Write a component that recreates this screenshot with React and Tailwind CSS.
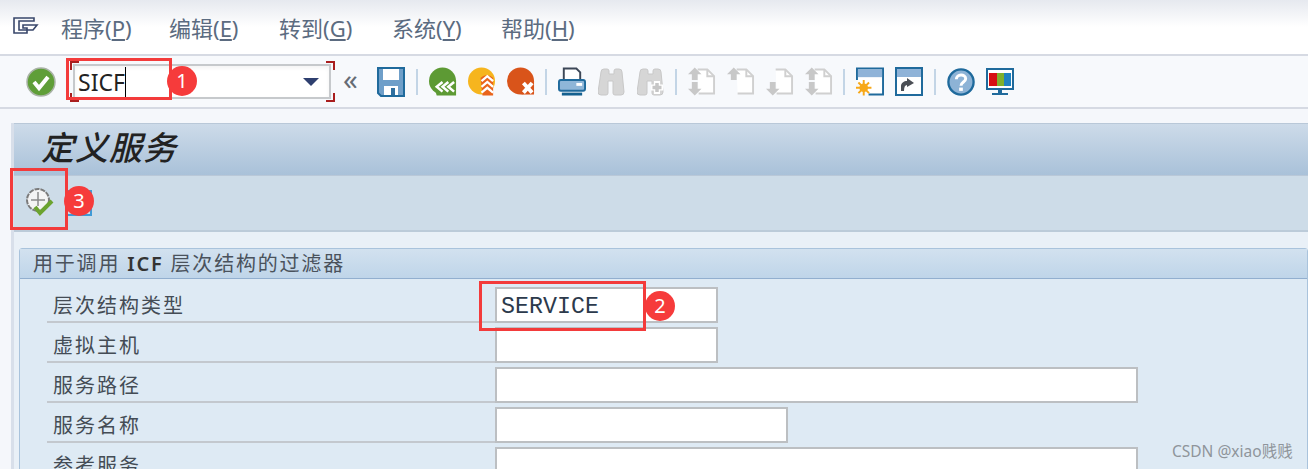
const cjk = { fontFamily: '"Noto Sans", "Noto Sans CJK SC", sans-serif' };

function MenuItem({ label, hot, width }) {
  return (
    <span className={`text-[22px] leading-[30px] text-[#5b6b80] ${width}`}>
      {label}(<span className="underline underline-offset-2">{hot}</span>)
    </span>
  );
}

function Sep({ tight }) {
  return <span className={`mr-[11px] h-[26px] w-[2px] bg-[#c3d5e6] ${tight ? "ml-[10px]" : "ml-[11px]"}`} />;
}

function Slot({ children }) {
  return <span className="flex h-[32px] w-[28px] items-center justify-center [&+&]:ml-[11px]">{children}</span>;
}

function MenuIcon() {
  return (
    <svg width="27" height="22" viewBox="0 0 27 22" fill="none" stroke="#39476b" strokeWidth="1.6">
      <path d="M2 1h20v3H7v9h8v-2H11V8h14l-4 5h-6v3H2z" />
    </svg>
  );
}

function OkIcon() {
  return (
    <svg width="30" height="30" viewBox="0 0 30 30">
      <circle cx="15" cy="15" r="14" fill="#5f9e38" stroke="#a9b3a6" strokeWidth="1.5" />
      <path d="M8 15l5 6 9-11" fill="none" stroke="#fff" strokeWidth="4" />
    </svg>
  );
}

function SaveIcon() {
  return (
    <svg width="28" height="30" viewBox="0 0 28 30">
      <path d="M1 1h26v28H4l-3-3z" fill="#6f9fc9" stroke="#1f6a9c" strokeWidth="2" />
      <rect x="6" y="2" width="16" height="11" fill="#fff" />
      <rect x="7" y="19" width="14" height="9" fill="#fff" />
      <rect x="14" y="21" width="4" height="7" fill="#2f6f9f" />
    </svg>
  );
}

function BackIcon() {
  return (
    <svg width="29" height="29" viewBox="0 0 29 29">
      <circle cx="14" cy="14" r="14" fill="#5d9a34" />
      <path d="M5 19l7-6h16v16H8z" fill="#5d9a34" />
      <path d="M14 15l-6 5 6 5M20 15l-6 5 6 5M26 15l-6 5 6 5" fill="none" stroke="#fff" strokeWidth="2.6" />
    </svg>
  );
}

function ExitIcon() {
  return (
    <svg width="29" height="29" viewBox="0 0 29 29">
      <circle cx="14" cy="14" r="14" fill="#f6b51e" />
      <path d="M13 11c3-4 10-4 13 0v18H15z" fill="#e9641c" />
      <path d="M14 14l6-5 6 5M14 20l6-5 6 5M14 26l6-5 6 5" fill="none" stroke="#fff" strokeWidth="2.4" />
    </svg>
  );
}

function CancelIcon() {
  return (
    <svg width="29" height="29" viewBox="0 0 29 29">
      <circle cx="14" cy="14" r="14" fill="#d9541a" />
      <path d="M15 14h13v14H15z" fill="#d9541a" />
      <path d="M17 16l9 10M26 16l-9 10" stroke="#fff" strokeWidth="4" />
    </svg>
  );
}

function PrintIcon() {
  return (
    <svg width="29" height="30" viewBox="0 0 29 30">
      <path d="M6 13V1h13l4 4v8" fill="#fff" stroke="#3c4757" strokeWidth="2" />
      <rect x="1" y="13" width="27" height="11" rx="2" fill="#8fb6d8" stroke="#1f6a9c" strokeWidth="2" />
      <rect x="19" y="16" width="6" height="3" fill="#fff" />
      <rect x="4" y="26" width="21" height="3" fill="#14608f" />
    </svg>
  );
}

function FindIcon({ plus }) {
  return (
    <svg width="27" height="28" viewBox="0 0 27 28">
      <path d="M3 4q0-3 3-3h3q2 0 2 2v3h5V3q0-2 2-2h3q3 0 3 3l2 20q0 3-3 3h-6q-2 0-2-2V13h-5v12q0 2-2 2H3q-3 0-3-3z" fill="#d6d6d6" stroke="#c8c8c8" />
      {plus && <path d="M20 13v13M14 19.500h12" stroke="#fff" strokeWidth="6" />}
      {plus && <path d="M20 15v9M15.500 19.500h9" stroke="#c6c6c6" strokeWidth="3.500" />}
    </svg>
  );
}

function PageIcon({ up, down }) {
  return (
    <svg width="29" height="29" viewBox="0 0 29 29">
      <path d="M10 2h10l7 7v18H11" fill="#fff" stroke="#d0d0d0" strokeWidth="2" />
      <path d="M20 2v7h7" fill="none" stroke="#d0d0d0" strokeWidth="2" />
      {up && <path d="M7 0l7 7h-4v6H4V7H0z" fill="#c8c8c8" />}
      {down && <path d="M7 29l7-7h-4v-7H4v7H0z" fill="#c8c8c8" />}
    </svg>
  );
}

function SessionIcon() {
  return (
    <svg width="29" height="29" viewBox="0 0 29 29">
      <path d="M1 13V1h27v27H13" fill="#fff" stroke="#1f6a9c" strokeWidth="2" />
      <rect x="2" y="2" width="25" height="8" fill="#8fb3d8" />
      <circle cx="8" cy="21" r="4.500" fill="#f7a818" />
      <path d="M8 13v16M0 21h16M2.500 15.500l11 11M13.500 15.500l-11 11" stroke="#f7a818" strokeWidth="2" />
    </svg>
  );
}

function ShortcutIcon() {
  return (
    <svg width="28" height="29" viewBox="0 0 28 29">
      <rect x="1" y="1" width="26" height="27" fill="#fff" stroke="#1f6a9c" strokeWidth="2" />
      <rect x="2" y="2" width="24" height="8" fill="#8fb3d8" />
      <path d="M6 24v-5c0-3 3-5 6-5v-3l7 5-7 4v-2c-2 0-3 2-3 6z" fill="#4b4f55" />
    </svg>
  );
}

function HelpIcon() {
  return (
    <svg width="30" height="30" viewBox="0 0 30 30">
      <circle cx="15" cy="15" r="13.500" fill="#8db3d6" stroke="#1f6a9c" strokeWidth="2.500" />
      <path d="M10 12c0-6 10-6 10-.5 0 3.500-5 3.500-5 7.500" fill="none" stroke="#fff" strokeWidth="3.200" />
      <rect x="13" y="21" width="4" height="3.500" fill="#fff" />
    </svg>
  );
}

function LayoutIcon() {
  return (
    <svg width="28" height="28" viewBox="0 0 28 28">
      <rect x="1" y="1" width="26" height="20" fill="#fff" stroke="#1f6a9c" strokeWidth="2" />
      <rect x="3" y="5" width="8" height="13" fill="#d60f12" />
      <rect x="11" y="5" width="7" height="13" fill="#7fb02c" />
      <rect x="18" y="5" width="7" height="13" fill="#1f82c0" />
      <path d="M12 21h4v4h-4zM6 25h16v2H6z" fill="#1f6a9c" />
    </svg>
  );
}

function ClockIcon() {
  return (
    <svg width="30" height="30" viewBox="0 0 30 30">
      <circle cx="12" cy="12" r="11" fill="#f4f4f4" stroke="#7b7b7b" strokeWidth="2" strokeDasharray="5 1" />
      <path d="M12 4v14M5 12h14" stroke="#8a8a8a" strokeWidth="1.500" />
      <path d="M9 19l5 6 12-12" fill="none" stroke="#6ba32f" strokeWidth="4" />
    </svg>
  );
}

function Field({ label, width, value }) {
  return (
    <div className="flex h-[40px] items-end">
      <div className="flex h-full w-[449px] items-center border-b-2 border-[#c3c8ce] pl-[6px] pt-[7px] text-[20px] tracking-[2px] text-[#444c55]">
        {label}
      </div>
      <div className={`h-[36px] ${width} -ml-px border-2 border-[#bcbfc2] bg-white pl-[4px] text-[23.300px] leading-[36px] text-[#2c3a4c] [font-family:'Liberation_Mono',monospace]`}>
        {value}
      </div>
    </div>
  );
}

function Marker({ className }) {
  return <div className={`absolute border-[3px] border-[#f33b3b] ${className}`} />;
}

function Badge({ n, className }) {
  return (
    <div className={`absolute flex h-[30px] w-[30px] items-center justify-center rounded-full bg-[#f63b3b] text-[20px] text-white ${className}`}>
      {n}
    </div>
  );
}

export default function App() {
  return (
    <div className="relative h-[469px] w-[1308px] overflow-hidden bg-[#f5f7fb]" style={cjk}>
      <div className="flex h-[54px] items-center bg-gradient-to-b from-[#e6e9ef] via-white to-white to-30% pl-[12px] pt-[2px]">
        <MenuIcon />
        <div className="ml-[22px] flex">
          <MenuItem label="程序" hot="P" width="w-[108px]" />
          <MenuItem label="编辑" hot="E" width="w-[110px]" />
          <MenuItem label="转到" hot="G" width="w-[113px]" />
          <MenuItem label="系统" hot="Y" width="w-[109px]" />
          <MenuItem label="帮助" hot="H" width="w-[100px]" />
        </div>
      </div>

      <div className="flex h-[55px] items-center border-y-2 border-[#d6dae3] bg-[#f7f9fc] pl-[26px]">
        <OkIcon />
        <div className="relative ml-[17px] flex h-[35px] w-[258px] items-center justify-between border-2 border-[#c6c9cc] bg-white pl-[3px] pr-[10px] shadow-inner">
          <span className="border-r border-black text-[23px] leading-[30px] text-[#222]">SICF</span>
          <span className="h-0 w-0 border-x-[8px] border-t-[8px] border-x-transparent border-t-[#2e3f6f]" />
          <span className="absolute -left-[5px] -top-[5px] h-[9px] w-[9px] border-l-2 border-t-2 border-[#a91e1e]" />
          <span className="absolute -right-[6px] -top-[5px] h-[9px] w-[9px] border-r-2 border-t-2 border-[#a91e1e]" />
          <span className="absolute -bottom-[5px] -left-[5px] h-[9px] w-[9px] border-b-2 border-l-2 border-[#a91e1e]" />
          <span className="absolute -bottom-[5px] -right-[6px] h-[9px] w-[9px] border-b-2 border-r-2 border-[#a91e1e]" />
        </div>
        <span className="ml-[12px] w-[34px] pb-[6px] text-[29px] leading-none text-[#666c74]">«</span>
        <SaveIcon />
        <Sep />
        <Slot><BackIcon /></Slot>
        <Slot><ExitIcon /></Slot>
        <Slot><CancelIcon /></Slot>
        <Sep tight />
        <Slot><PrintIcon /></Slot>
        <Slot><FindIcon /></Slot>
        <Slot><FindIcon plus /></Slot>
        <Sep />
        <Slot><PageIcon up down /></Slot>
        <Slot><PageIcon up /></Slot>
        <Slot><PageIcon down /></Slot>
        <Slot><PageIcon up down /></Slot>
        <Sep tight />
        <Slot><SessionIcon /></Slot>
        <Slot><ShortcutIcon /></Slot>
        <Sep />
        <Slot><HelpIcon /></Slot>
        <Slot><LayoutIcon /></Slot>
      </div>

      <div className="ml-[11px] mt-[14px] h-[346px] border-l-[3px] border-[#d8dfea] bg-[#e9f0f7]">
        <div className="flex h-[53px] items-center border-y border-[#b9c8d8] bg-gradient-to-b from-[#cddbe9] to-[#a9c1d9] pb-[5px] pl-[27px]">
          <h1 className="text-[33px] font-medium italic leading-none tracking-[1px] text-[#222]">定义服务</h1>
        </div>
        <div className="flex h-[56px] items-center gap-[10px] border-b-2 border-[#bccbd9] bg-[#cddce8] pl-[12px]">
          <ClockIcon />
          <span className="h-[26px] w-[26px] border-2 border-[#3f9ad6] bg-[#cddce8]" />
        </div>
        <div className="ml-[5px] mt-[16px] h-[240px] rounded-t-[3px] border border-[#a9c3dc] bg-[#deeaf4]">
          <div className="flex h-[30px] items-center border-b border-[#92afcf] bg-gradient-to-b from-[#d2e1ef] to-[#bfd5e9] pl-[13px] text-[20px] tracking-[1.800px] text-[#4a525c]">
            用于调用&nbsp;<b className="font-semibold text-[#333]">ICF</b>&nbsp;层次结构的过滤器
          </div>
          <div className="ml-[27px] mt-[4px]">
            <Field label="层次结构类型" width="w-[223px]" value="SERVICE" />
            <Field label="虚拟主机" width="w-[223px]" />
            <Field label="服务路径" width="w-[643px]" />
            <Field label="服务名称" width="w-[293px]" />
            <Field label="参考服务" width="w-[643px]" />
          </div>
        </div>
      </div>

      <Marker className="left-[66px] top-[58px] h-[42px] w-[106px]" />
      <Marker className="left-[479px] top-[281px] h-[50px] w-[167px]" />
      <Marker className="left-[10px] top-[168px] h-[62px] w-[58px]" />
      <Badge n="1" className="left-[167px] top-[66px]" />
      <Badge n="2" className="left-[645px] top-[291px]" />
      <Badge n="3" className="left-[64px] top-[186px]" />
      <div className="absolute left-[1172px] top-[440px] text-[15.500px] text-[#8f959b]">CSDN @xiao贱贱</div>
    </div>
  );
}
